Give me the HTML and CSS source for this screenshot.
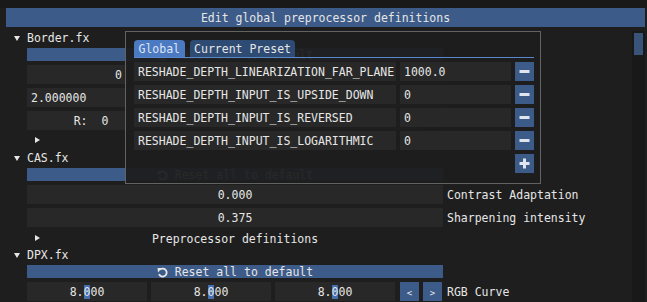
FILE: index.html
```html
<!DOCTYPE html>
<html>
<head>
<meta charset="utf-8">
<link rel="stylesheet" href="styles.css">
</head>
<body>
<div class="topbar"></div>
<div class="title">Edit global preprocessor definitions</div>
<div class="main">
  <div class="content">
    <div class="hdr"><svg class="down" width="6" height="5" viewBox="0 0 6 5"><polygon points="0,0 6,0 3,5" fill="#e6e6e6"/></svg><span>Border.fx</span></div>
    <div class="bar"><svg class="reset" width="11" height="11" viewBox="0 0 11 11"><path d="M3 2.6 A4 4 0 1 1 2 7.2" fill="none" stroke="#e6e6e6" stroke-width="1.8"/><polygon points="0.5,1 5,1 1,5.5" fill="#e6e6e6"/></svg> Reset all to default</div>
    <div class="row"><div class="ctl quad"><div class="fld right">0</div><div class="fld right"></div><div class="fld right"></div><div class="fld right"></div></div></div>
    <div class="row"><div class="ctl"><div class="fld left">2.000000</div></div></div>
    <div class="row"><div class="ctl"><div class="fld rgb">R:  0</div><div class="fld rgb"></div><div class="fld rgb"></div><div class="swatch"></div></div></div>
    <div class="tree"><svg class="right-arrow" width="5" height="6" viewBox="0 0 5 6"><polygon points="0,0 5,3 0,6" fill="#e6e6e6"/></svg></div>

    <div class="hdr"><svg class="down" width="6" height="5" viewBox="0 0 6 5"><polygon points="0,0 6,0 3,5" fill="#e6e6e6"/></svg><span>CAS.fx</span></div>
    <div class="bar"><svg class="reset" width="11" height="11" viewBox="0 0 11 11"><path d="M3 2.6 A4 4 0 1 1 2 7.2" fill="none" stroke="#e6e6e6" stroke-width="1.8"/><polygon points="0.5,1 5,1 1,5.5" fill="#e6e6e6"/></svg> Reset all to default</div>
    <div class="row"><div class="ctl"><div class="fld">0.000</div></div><span class="lbl">Contrast Adaptation</span></div>
    <div class="row"><div class="ctl"><div class="fld">0.375</div></div><span class="lbl">Sharpening intensity</span></div>
    <div class="tree"><svg class="right-arrow" width="5" height="6" viewBox="0 0 5 6"><polygon points="0,0 5,3 0,6" fill="#e6e6e6"/></svg><span class="tree-text">Preprocessor definitions</span></div>

    <div class="hdr"><svg class="down" width="6" height="5" viewBox="0 0 6 5"><polygon points="0,0 6,0 3,5" fill="#e6e6e6"/></svg><span>DPX.fx</span></div>
    <div class="bar"><svg class="reset" width="11" height="11" viewBox="0 0 11 11"><path d="M3 2.6 A4 4 0 1 1 2 7.2" fill="none" stroke="#e6e6e6" stroke-width="1.8"/><polygon points="0.5,1 5,1 1,5.5" fill="#e6e6e6"/></svg> Reset all to default</div>
    <div class="row"><div class="ctl"><div class="fld third">8.<span class="sel">0</span>00</div><div class="fld third">8.<span class="sel">0</span>00</div><div class="fld third">8.<span class="sel">0</span>00</div><div class="btn first">&lt;</div><div class="btn">&gt;</div></div><span class="lbl">RGB Curve</span></div>
  </div>
  <div class="scroll"><div class="thumb"></div></div>
</div>

<div class="popup">
  <div class="tabs">
    <div class="tab active">Global</div>
    <div class="tab">Current Preset</div>
  </div>
  <div class="prow"><div class="pname">RESHADE_DEPTH_LINEARIZATION_FAR_PLANE</div><div class="pval">1000.0</div><div class="pbtn"><svg width="19" height="19" viewBox="0 0 19 19"><rect x="4.5" y="8" width="10" height="3" fill="#dfe4ee"/></svg></div></div>
  <div class="prow"><div class="pname">RESHADE_DEPTH_INPUT_IS_UPSIDE_DOWN</div><div class="pval">0</div><div class="pbtn"><svg width="19" height="19" viewBox="0 0 19 19"><rect x="4.5" y="8" width="10" height="3" fill="#dfe4ee"/></svg></div></div>
  <div class="prow"><div class="pname">RESHADE_DEPTH_INPUT_IS_REVERSED</div><div class="pval">0</div><div class="pbtn"><svg width="19" height="19" viewBox="0 0 19 19"><rect x="4.5" y="8" width="10" height="3" fill="#dfe4ee"/></svg></div></div>
  <div class="prow"><div class="pname">RESHADE_DEPTH_INPUT_IS_LOGARITHMIC</div><div class="pval">0</div><div class="pbtn"><svg width="19" height="19" viewBox="0 0 19 19"><rect x="4.5" y="8" width="10" height="3" fill="#dfe4ee"/></svg></div></div>
  <div class="prow end"><div class="pbtn"><svg width="19" height="19" viewBox="0 0 19 19"><rect x="4.5" y="8" width="10" height="3" fill="#dfe4ee"/><rect x="8" y="4.5" width="3" height="10" fill="#dfe4ee"/></svg></div></div>
</div>
</body>
</html>
```

FILE: styles.css
```css
* { box-sizing: border-box; }
html, body { margin: 0; padding: 0; }
body {
  width: 647px;
  height: 302px;
  overflow: hidden;
  position: relative;
  background: #1e1e1e;
  color: #e6e6e6;
  font-family: "DejaVu Sans Mono", monospace;
  font-size: 11.5px;
}
.topbar { height: 8px; background: #191919; }
.title {
  margin-left: 6px;
  width: 639px;
  height: 19px;
  padding-top: 2px;
  line-height: 17px;
  background: #3d5b89;
  text-align: center;
  white-space: pre;
}
.main { display: flex; height: 275px; }
.content {
  flex: 1;
  padding-top: 3px;
  display: flex;
  flex-direction: column;
  gap: 4px;
}
.scroll {
  width: 13px;
  margin: 4px 2px 0 0;
  background: #191919;
  padding: 2px;
}
.thumb { width: 9px; height: 22px; background: #3a5479; }

.hdr {
  height: 14px;
  padding-top: 2px;
  display: flex;
  align-items: center;
  padding-left: 14px;
  white-space: pre;
}
.hdr .down { margin-right: 7px; }

.bar {
  margin-left: 27px;
  width: 416px;
  height: 13px;
  padding-top: 1px;
  line-height: 12px;
  background: #3d5b89;
  display: flex;
  align-items: center;
  justify-content: center;
  white-space: pre;
}
.reset { display: block; }

.row {
  margin-left: 27px;
  height: 19px;
  display: flex;
  gap: 4px;
}
.ctl { width: 416px; display: flex; gap: 4px; }
.fld {
  flex: 1;
  height: 19px;
  padding-top: 2px;
  line-height: 17px;
  background: #282828;
  text-align: center;
  white-space: pre;
  overflow: hidden;
}
.fld.left { text-align: left; padding-left: 4px; }
.fld.right { text-align: right; padding-right: 6px; }
.fld.rgb { flex: 0 0 128px; }
.fld.third { flex: 0 0 120px; }
.swatch { width: 19px; height: 19px; background: #000; }
.sel { background: #4670b0; }
.lbl { padding-top: 2px; line-height: 17px; white-space: pre; }
.btn {
  width: 19px;
  height: 19px;
  padding-top: 3px;
  line-height: 16px;
  background: #3d5b89;
  text-align: center;
  font-size: 9px;
}
.btn.first { margin-left: 1px; }

.tree {
  margin-left: 27px;
  width: 416px;
  height: 12px;
  display: grid;
  align-items: center;
}
.tree > * { grid-area: 1 / 1; }
.right-arrow { justify-self: start; margin-left: 8px; }
.tree-text { justify-self: center; padding-top: 2px; line-height: 12px; white-space: pre; }

.popup {
  position: absolute;
  left: 125px;
  top: 31px;
  width: 416px;
  height: 153px;
  background: rgba(30, 30, 30, 0.95);
  border: 1px solid #626262;
  padding: 8px 6px 0 8px;
}
.tabs {
  display: flex;
  gap: 5px;
  height: 18px;
  border-bottom: 1px solid #5a86cc;
}
.tab {
  height: 17px;
  padding: 2px 4.5px 0;
  line-height: 15px;
  background: #2e4b74;
  border-radius: 4px 4px 0 0;
  white-space: pre;
}
.tab.active { background: #4b79c2; color: #dde5f5; }
.prow {
  display: flex;
  gap: 4px;
  height: 19px;
  margin-top: 4px;
}
.prow.end { justify-content: flex-end; }
.pname, .pval {
  height: 19px;
  padding: 2px 0 0 4px;
  line-height: 17px;
  background: #282828;
  white-space: pre;
  overflow: hidden;
}
.pname { width: 262px; }
.pval { width: 111px; }
.pbtn { width: 19px; height: 19px; background: #3d5b89; }
.pbtn svg { display: block; }
```
